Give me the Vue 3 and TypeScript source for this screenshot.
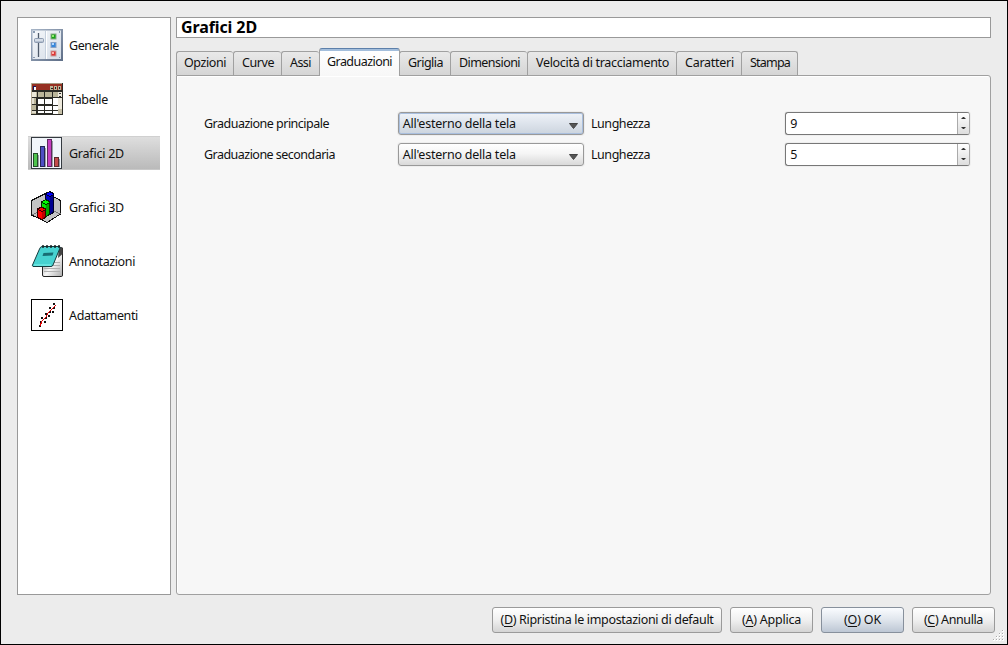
<script setup lang="ts">
interface Entry { label: string; icon: string; width: number }
interface Tab { label: string; size: number; text: number }
interface Row { label: string; labelWidth: number; value: string; length: number; focused: boolean }
interface Action { key: string; text: string; size: number; textWidth: number; primary?: boolean }

const entries: Entry[] = [
  { label: 'Generale', icon: 'general', width: 50 },
  { label: 'Tabelle', icon: 'tables', width: 39 },
  { label: 'Grafici 2D', icon: 'bars', width: 55 },
  { label: 'Grafici 3D', icon: 'bars3d', width: 55 },
  { label: 'Annotazioni', icon: 'notes', width: 66 },
  { label: 'Adattamenti', icon: 'fit', width: 69 },
]
const tabs: Tab[] = [
  { label: 'Opzioni', size: 57, text: 42 },
  { label: 'Curve', size: 48, text: 32 },
  { label: 'Assi', size: 38, text: 21 },
  { label: 'Graduazioni', size: 81, text: 65 },
  { label: 'Griglia', size: 51, text: 35 },
  { label: 'Dimensioni', size: 77, text: 61 },
  { label: 'Velocità di tracciamento', size: 149, text: 133 },
  { label: 'Caratteri', size: 65, text: 49 },
  { label: 'Stampa', size: 57, text: 40 },
]
const rows: Row[] = [
  { label: 'Graduazione principale', labelWidth: 125, value: "All'esterno della tela", length: 9, focused: true },
  { label: 'Graduazione secondaria', labelWidth: 131, value: "All'esterno della tela", length: 5, focused: false },
]
const actions: Action[] = [
  { key: 'D', text: 'Ripristina le impostazioni di default', size: 230, textWidth: 213 },
  { key: 'A', text: 'Applica', size: 83, textWidth: 59 },
  { key: 'O', text: 'OK', size: 83, textWidth: 37, primary: true },
  { key: 'C', text: 'Annulla', size: 83, textWidth: 59 },
]

// Spreads the letters so that a label takes the given width in pixels.
const vFit = {
  mounted(el: HTMLElement, binding: { value: number }) {
    const count = (el.textContent ?? '').length
    const natural = el.getBoundingClientRect().width
    el.style.letterSpacing = `${(binding.value - natural) / count}px`
  },
}
</script>

<template>
  <div class="dialog">
    <div class="main">
      <nav class="sidebar">
        <div v-for="e in entries" :key="e.label" class="entry" :class="{ selected: e.icon === 'bars' }">
          <svg v-if="e.icon === 'general'" class="icon" viewBox="0 0 32 32">
            <defs>
              <linearGradient id="steel" x1="0" y1="0" x2="1" y2="1"><stop offset="0" stop-color="#a8b6c8" /><stop offset="1" stop-color="#5e6e87" /></linearGradient>
              <linearGradient id="plate" x1="0" y1="0" x2="1" y2="1"><stop offset="0" stop-color="#f4f7fa" /><stop offset="1" stop-color="#d5dde7" /></linearGradient>
            </defs>
            <rect width="32" height="32" fill="url(#steel)" />
            <rect x="1.5" y="1.5" width="28.5" height="28.5" fill="url(#plate)" />
            <path d="M14.5 2v28" stroke="#c5d0dd" /><path d="M15.5 2v28" stroke="#fff" />
            <path d="M2 2h2v2H2zM28 2h1v2h-1zM2 28h2v1H2zM28 28h1v1h-1z" fill="#8a9bb0" />
            <path d="M7.5 4v24" stroke="#4e5a6a" stroke-width="1.3" />
            <rect x="3.5" y="9.5" width="9" height="4" rx="1" fill="#b4c0d0" stroke="#8d9bb0" /><path d="M4 11h8" stroke="#f4f8fc" />
            <rect x="20" y="5" width="5" height="5" fill="#16a416" stroke="#8aa68a" /><rect x="21" y="6" width="2" height="2" fill="#90ed70" />
            <rect x="20" y="13.500" width="5" height="5" fill="#3487dd" stroke="#8aa2c4" /><rect x="21" y="14" width="2" height="2" fill="#b0d8ff" />
            <rect x="20" y="22" width="5" height="5" fill="#df3434" stroke="#c59b9b" /><rect x="21" y="23" width="2" height="2" fill="#ffb0a8" />
          </svg>
          <svg v-else-if="e.icon === 'tables'" class="icon" viewBox="0 0 32 32" shape-rendering="crispEdges">
            <rect width="32" height="32" fill="#2a2a25" />
            <path d="M0 0h31v1H0z" fill="#a89a84" /><path d="M0 0h1v31H0z" fill="#b3aa94" />
            <path d="M1 1h30v6H1z" fill="#963022" /><path d="M2 3h3v4H2z" fill="#15155d" /><path d="M3 4h2v3H3z" fill="#fff" />
            <path d="M19 3h3v4h-3zM23 3h3v4h-3zM27 3h3v4h-3z" fill="#b9b497" /><path d="M20 5h2v1h-2zM24 4h1v2h-1zM28 4h1v2h-1z" fill="#222" />
            <path d="M1 9h4v5H1z" fill="#ece9d8" /><path d="M5 9h1v5H5zM7 9h6v5H7zM14 9h7v5h-7zM22 9h5v5h-5z" fill="#bbb69a" />
            <path d="M1 15h4v6H1zM1 22h4v5H1zM1 28h4v3H1z" fill="#bbb69a" /><path d="M1 15h2v6H1zM1 28h4v2H1z" fill="#e4e0d0" />
            <path d="M7 16h6v5H7zM14 16h7v5h-7zM7 23h6v4H7zM14 23h7v4h-7zM7 28h6v2H7zM14 28h7v2h-7zM22 15h9v7h-9zM22 23h9v4h-9zM22 28h9v3h-9z" fill="#fff" />
            <path d="M27 9h4v5h-4zM27 15h4v11h-4z" fill="#eeeadd" /><path d="M28 10h2v1h-2zM28 13h2v1h-2z" fill="#333" /><path d="M27 26h4v5h-4z" fill="#c6c0a8" />
          </svg>
          <svg v-else-if="e.icon === 'bars'" class="icon" viewBox="0 0 32 32">
            <rect x=".5" y=".5" width="30" height="31" fill="#f1f5fa" stroke="#343a40" />
            <path d="M4 18h4v12H4zM11 11h4v19h-4zM18 4h4v26h-4zM25 22h4v8h-4z" fill="#999fa6" />
            <rect x="2.500" y="16.500" width="4" height="13" fill="#4dc44d" stroke="#244c2a" /><rect x="9.500" y="9.500" width="4" height="20" fill="#4e4ec4" stroke="#252554" /><rect x="16.500" y="2.500" width="4" height="27" fill="#c63ec0" stroke="#5d2a5c" /><rect x="23.500" y="20.500" width="4" height="9" fill="#c34b4b" stroke="#592a2a" />
          </svg>
          <svg v-else-if="e.icon === 'bars3d'" class="icon" viewBox="0 0 32 32" shape-rendering="crispEdges">
            <path d="M.5 9.500 15.500 2l14 7.500V23L16 31.500.5 24z" fill="#c3c3c3" stroke="#111" />
            <path d="M15.500 17 1 24M15.500 17l14 6" fill="none" stroke="#777" />
            <path d="M14.500 3.500v18l4 2 4-2v-18z" fill="#0000c9" stroke="#000025" /><path d="M19 5v18l3-2V4z" fill="#000090" /><path d="m14.500 3 4-2.500 4 2-.5 2-3.500 1z" fill="#00f" stroke="#000025" />
            <path d="M10.500 11.500v13l4 1 4-2v-12z" fill="#00e900" stroke="#002a00" /><path d="M15 13v12l3-2V12z" fill="#00a800" /><path d="m10.500 11 4-2.500 4 2-.5 2-3.500 1z" fill="#0f0" stroke="#002a00" />
            <path d="M6.500 18.500v8l4 2 4-2v-8z" fill="#f00" stroke="#300" /><path d="M11 20v8l3-2v-7z" fill="#c00000" /><path d="m6.500 18 4-2 4 2-.5 1.500-3.500 1z" fill="#f00" stroke="#300" />
          </svg>
          <svg v-else-if="e.icon === 'notes'" class="icon" viewBox="0 0 32 32">
            <defs><linearGradient id="paper" y1="0" x2="1" y2="1"><stop offset="0" stop-color="#666" /><stop offset=".55" stop-color="#f6f6f6" /><stop offset="1" stop-color="#aaa" /></linearGradient></defs>
            <path d="M11.500 8V30q0 1.500 1.500 1.500h17.500q1 0 1-1.500V3z" fill="url(#paper)" stroke="#222" />
            <path d="M13 23.500h16M13 26.500h16M20 20.500h9M23 17.500h6" stroke="#b0b0b0" />
            <path d="M28 2h2.500q1 0 1 1.500V9L27 13z" fill="#444" />
            <path d="M11 1.500h17q1.500 0 1 1.500l-7 17q-.5 1.500-2 1.500H2Q1 21 1.500 20L8.500 4q1-2.500 2.500-2.500z" fill="#47d2d0" stroke="#143b3e" />
            <path d="M11 1.500h18" stroke="#162426" stroke-width="2.500" stroke-dasharray="2 2" />
            <path d="m12.500 8 10-.5-1 3-10 .5z" fill="#176d73" /><path d="M3 20h17" stroke="#86f5ef" />
          </svg>
          <svg v-else class="icon" viewBox="0 0 32 32" shape-rendering="crispEdges">
            <rect x=".5" y=".5" width="31" height="31" fill="#fff" stroke="#000" />
            <path d="M8 26h2v2H8zM9 22h2v2H9zM13 22h2v2h-2zM10 18h2v2h-2zM14 18h2v2h-2zM14 14h2v2h-2zM17 16h2v2h-2zM18 12h2v2h-2zM18 8h2v2h-2zM21 12h2v2h-2zM22 8h2v2h-2zM22 4h2v2h-2z" fill="#111" />
            <path d="m9 27 2-5 4-4 2-4 4-4 4-4" fill="none" stroke="#e50000" stroke-width="1.200" />
          </svg>
          <span v-fit="e.width">{{ e.label }}</span>
        </div>
      </nav>
      <section class="content">
        <h1><span v-fit="76">Grafici 2D</span></h1>
        <div class="tabs">
          <div v-for="t in tabs" :key="t.label" class="tab" :class="{ active: t.label === 'Graduazioni' }" :style="{ width: t.size + 'px' }">
            <span v-fit="t.text">{{ t.label }}</span>
          </div>
        </div>
        <div class="panel">
          <div v-for="r in rows" :key="r.label" class="row">
            <div class="caption"><span v-fit="r.labelWidth">{{ r.label }}</span></div>
            <div class="combo" :class="{ focused: r.focused }">
              <span v-fit="113">{{ r.value }}</span>
              <svg width="9" height="6" viewBox="0 0 9 6"><path d="M.5.500h8L4.500 5.500z" fill="#555" stroke="#444" /></svg>
            </div>
            <div class="length"><span v-fit="59">Lunghezza</span></div>
            <div class="spin">
              <span class="number">{{ r.length }}</span>
              <span class="arrows">
                <svg width="5" height="3" viewBox="0 0 5 3"><path d="M0 3h5L3 1H2z" fill="#333" /></svg>
                <svg width="5" height="3" viewBox="0 0 5 3"><path d="M0 0h5L3 2H2z" fill="#333" /></svg>
              </span>
            </div>
          </div>
        </div>
      </section>
    </div>
    <footer>
      <button v-for="a in actions" :key="a.key" :class="{ primary: a.primary }" :style="{ width: a.size + 'px' }">
        <span v-fit="a.textWidth">(<u>{{ a.key }}</u>) {{ a.text }}</span>
      </button>
    </footer>
    <svg class="grip" width="12" height="12" viewBox="0 0 12 12" shape-rendering="crispEdges">
      <path d="M9 0h2v2H9zM6 3h2v2H6zM9 3h2v2H9zM3 6h2v2H3zM6 6h2v2H6zM9 6h2v2H9zM0 9h2v2H0zM3 9h2v2H3zM6 9h2v2H6zM9 9h2v2H9z" fill="#fff" />
      <path d="M9 0h1v1H9zM6 3h1v1H6zM9 3h1v1H9zM3 6h1v1H3zM6 6h1v1H6zM9 6h1v1H9zM0 9h1v1H0zM3 9h1v1H3zM6 9h1v1H6zM9 9h1v1H9z" fill="#aaa" />
    </svg>
  </div>
</template>

<style>
body { margin: 0; }
</style>

<style scoped>
* { box-sizing: border-box; }
.dialog { position: relative; width: 1008px; height: 645px; border: 1px solid #000; background: #ececec; padding: 16px 12px 0 16px; font: 12.5px/18px "Noto Sans", "Open Sans", sans-serif; color: #111; overflow: hidden; }
span { white-space: nowrap; }
.main { display: flex; gap: 5px; height: 578px; }
.sidebar { width: 154px; border: 1px solid #999; background: #fff; padding: 10px; display: flex; flex-direction: column; gap: 20px; }
.entry { height: 34px; flex: none; display: flex; align-items: center; padding-left: 3px; gap: 6px; }
.entry span { padding-top: 2px; }
.entry.selected { background: linear-gradient(#dedede, #bababa); border-top: 1px solid #d0d0d0; border-bottom: 1px solid #c8c8c8; }
.icon { width: 32px; height: 32px; flex: none; }
.content { width: 815px; display: flex; flex-direction: column; }
h1 { margin: 0; height: 21px; border: 1px solid #999; background: #fff; padding-left: 4px; font-size: 16px; line-height: 19px; font-weight: 700; color: #000; }
.tabs { display: flex; align-items: flex-end; height: 37px; }
.tab { height: 24px; flex: none; padding-left: 8px; line-height: 22px; border: 1px solid #a0a0a0; border-right: 0; border-bottom: 0; border-radius: 3px 3px 0 0; background: linear-gradient(#e9e9e9, #d5d5d5); }
.tab:first-child, .tab.active ~ .tab { padding-left: 7px; }
.tab:last-child { border-right: 1px solid #a0a0a0; }
.tab.active { position: relative; height: 28px; margin: 0 -1px -1px 0; padding-left: 7px; line-height: 25px; border-right: 1px solid #a0a0a0; border-top: 1px solid #5d80aa; background: linear-gradient(#a3bedc 0 2px, #fff 2px, #f7f7f7); }
.tab.active ~ .tab { padding-left: 8px; }
.panel { flex: 1; border: 1px solid #a0a0a0; border-radius: 0 3px 3px 3px; background: #f7f7f7; box-shadow: inset 1px 1px #fff; padding: 36px 20px 0 27px; display: flex; flex-direction: column; gap: 8px; }
.row { display: flex; height: 23px; line-height: 24px; }
.caption { width: 194px; }
.combo { width: 186px; height: 23px; border: 1px solid #999; border-radius: 3px; padding: 0 5px 0 4px; line-height: 22px; display: flex; align-items: center; justify-content: space-between; background: linear-gradient(#fff, #f5f5f5 45%, #d9d9d9); box-shadow: 0 0 0 1px #eee; }
.combo svg { margin-top: 4px; }
.combo.focused { background: linear-gradient(#eff3f8, #dfe5ed 45%, #ccd4de); box-shadow: inset 0 0 0 1px #a9bfde, 0 0 0 1px #eee; }
.length { width: 202px; padding-left: 7.500px; }
.spin { width: 185px; height: 23px; border: 1px solid #777; border-right-color: #aaa; border-radius: 3px; background: #fff; display: flex; justify-content: space-between; line-height: 22px; padding-left: 4px; box-shadow: 0 0 0 1px #eee; overflow: hidden; }
.arrows { width: 12px; border-left: 1px solid #aaa; background: linear-gradient(#fff, #ddd); display: flex; flex-direction: column; justify-content: space-between; align-items: center; padding: 3px 0 4px; }
footer { display: flex; justify-content: flex-end; gap: 8px; padding-top: 12px; }
button { flex: none; height: 26px; padding: 0; border: 1px solid #9a9a9a; border-radius: 3px; background: linear-gradient(#fff, #f0f0f0 50%, #d4d4d4); font: inherit; color: inherit; line-height: 22px; text-align: center; }
button.primary { border-color: #87909c; background: linear-gradient(#fafcff, #dfe5ec 50%, #bdc7d4); }
u { text-underline-offset: 2px; }
.grip { position: absolute; right: 2px; bottom: 2px; }
</style>
